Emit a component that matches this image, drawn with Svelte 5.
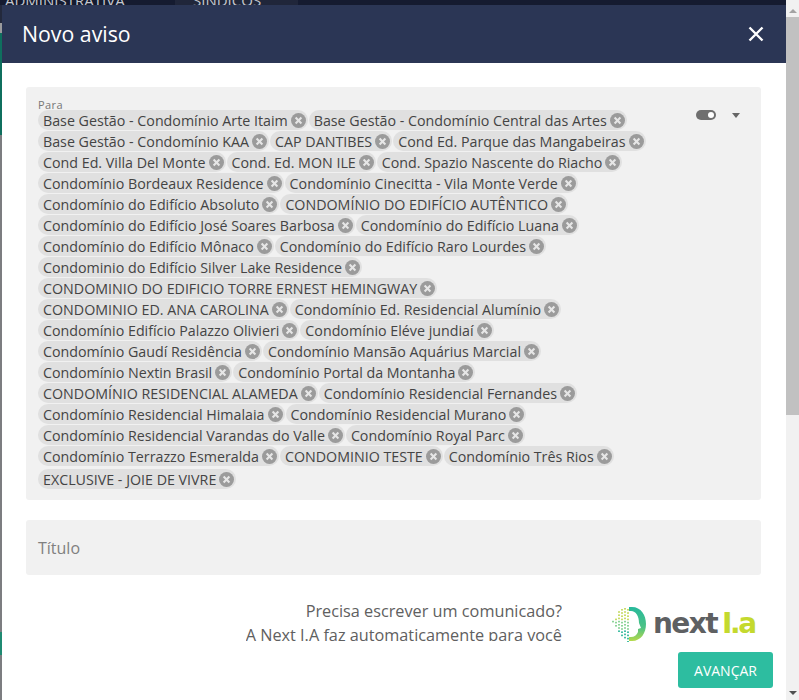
<script>
	const groups = [
		['Base Gestão - Condomínio Arte Itaim', 'Base Gestão - Condomínio Central das Artes'],
		['Base Gestão - Condomínio KAA', 'CAP DANTIBES', 'Cond Ed. Parque das Mangabeiras'],
		['Cond Ed. Villa Del Monte', 'Cond. Ed. MON ILE', 'Cond. Spazio Nascente do Riacho'],
		['Condomínio Bordeaux Residence', 'Condomínio Cinecitta - Vila Monte Verde'],
		['Condomínio do Edifício Absoluto', 'CONDOMÍNIO DO EDIFÍCIO AUTÊNTICO'],
		['Condomínio do Edifício José Soares Barbosa', 'Condomínio do Edifício Luana'],
		['Condomínio do Edifício Mônaco', 'Condomínio do Edifício Raro Lourdes'],
		['Condominio do Edifício Silver Lake Residence'],
		['CONDOMINIO DO EDIFICIO TORRE ERNEST HEMINGWAY'],
		['CONDOMINIO ED. ANA CAROLINA', 'Condomínio Ed. Residencial Alumínio'],
		['Condomínio Edifício Palazzo Olivieri', 'Condomínio Eléve jundiaí'],
		['Condomínio Gaudí Residência', 'Condomínio Mansão Aquárius Marcial'],
		['Condomínio Nextin Brasil', 'Condomínio Portal da Montanha'],
		['CONDOMÍNIO RESIDENCIAL ALAMEDA', 'Condomínio Residencial Fernandes'],
		['Condomínio Residencial Himalaia', 'Condomínio Residencial Murano'],
		['Condomínio Residencial Varandas do Valle', 'Condomínio Royal Parc'],
		['Condomínio Terrazzo Esmeralda', 'CONDOMINIO TESTE', 'Condomínio Três Rios'],
		['EXCLUSIVE - JOIE DE VIVRE']
	];
	// pixel cloud of the logo mark: narrow at top and bottom, wide in the middle
	const dots = [];
	for (let y = 2; y < 35; y += 3.2) {
		const spread = 16 - Math.abs(y - 15) * 0.7;
		for (let x = 15; x > 15 - spread; x -= 3) {
			dots.push({ x, y: y + (x % 2), color: y < 13 ? '#c9dd6a' : y < 22 ? '#8ed49a' : '#45c0a6' });
		}
	}
</script>

<div class="page">
	<div class="backdrop">
		<div class="behind"><span class="crumb">ADMINISTRATIVA</span><span class="tab">SÍNDICOS</span></div>
		<div class="modal">
			<header>
				<h2>Novo aviso</h2>
				<button class="close" aria-label="Fechar">
					<svg width="16" height="16" viewBox="0 0 16 16"><path d="M1.5 1.5 14.5 14.5M14.5 1.5 1.5 14.5" stroke="#fff" stroke-width="2.4" /></svg>
				</button>
			</header>
			<div class="content">
				<div class="field select">
					<div class="values">
						<div class="label">Para</div>
						{#each groups as group}
							<div class="row">
								{#each group as name}
									<span class="chip">
										{name}
										<svg class="remove" width="15" height="15" viewBox="0 0 15 15">
											<circle cx="7.5" cy="7.5" r="7.5" fill="#9b9b9b" />
											<path d="M4.6 4.6 10.4 10.4M10.4 4.6 4.6 10.4" stroke="#e6e6e6" stroke-width="2.1" />
										</svg>
									</span>
								{/each}
							</div>
						{/each}
					</div>
					<div class="controls">
						<span class="toggle"><i></i></span>
						<span class="caret"></span>
					</div>
				</div>
				<div class="field title">Título</div>
				<div class="promo">
					<div class="promo-text">
						<div>Precisa escrever um comunicado?</div>
						<div>A Next I.A faz automaticamente para você</div>
					</div>
					<div class="logo">
						<svg width="36" height="36" viewBox="0 0 36 36">
							<defs>
								<linearGradient id="arc" x1="0" y1="0" x2="0" y2="1">
									<stop offset="0" stop-color="#27b99b" />
									<stop offset="0.6" stop-color="#4cc285" />
									<stop offset="1" stop-color="#b5d94a" />
								</linearGradient>
							</defs>
							{#each dots as d}
								<rect x={d.x} y={d.y} width="2" height="1.6" fill={d.color} />
							{/each}
							<path d="M17 1h3c9 0 14 8 14 17s-5 17-14 17h-3v-4h2c3 0 6-2 7-5v-3l3-1-2-5c0-7-3-12-8-12h-2z" fill="url(#arc)" />
						</svg>
						<span class="logo-word"><span class="next">next</span><span class="ia">I.a</span></span>
					</div>
				</div>
				<div class="actions"><button class="next-btn">AVANÇAR</button></div>
			</div>
		</div>
	</div>
	<div class="scrollbar">
		<span class="arrow up"></span>
		<div class="thumb"></div>
		<div class="rest"></div>
		<span class="arrow down"></span>
	</div>
</div>

<style>
	:global(body) {
		margin: 0;
		font-family: 'Open Sans', sans-serif;
	}

	.page {
		display: flex;
		height: 700px;
		overflow: hidden;
		background: #5f6268;
	}

	.backdrop {
		flex: 1;
		min-width: 0;
		padding-left: 2px;
		overflow: hidden;
		background: linear-gradient(#23293c 0 23px, #9a9b9d 23px 33px, #0f6f5e 33px 135px, #7c7d80 135px 632px, #1f8a72 632px 655px, #7c7d80 655px);
	}

	.behind {
		display: flex;
		height: 5px;
		overflow: hidden;
		margin-left: -2px;
		background: #151b30;
		color: #c4c7cf;
		font-size: 15px;
		line-height: 0;
	}

	.crumb {
		width: 170px;
		padding-left: 5px;
	}

	.tab {
		width: 105px;
		padding-left: 18px;
		background: #20263a;
	}

	.modal {
		background: #fff;
		height: 695px;
		overflow: hidden;
	}

	header {
		display: flex;
		box-sizing: border-box;
		align-items: center;
		justify-content: space-between;
		height: 58px;
		padding: 0 22px 1px 20px;
		background: #2b3655;
	}

	h2 {
		margin: 0;
		color: #fff;
		font-size: 21.3px;
		font-weight: 400;
	}

	.close {
		display: flex;
		padding: 0;
		border: 0;
		background: none;
	}

	.content {
		padding: 24px 25px 0 24px;
	}

	.field {
		background: #f1f1f1;
		border-radius: 3px;
	}

	.select {
		display: flex;
		justify-content: space-between;
		padding: 11px 21px 11px 12px;
	}

	.label {
		height: 12px;
		color: #777;
		font-size: 11px;
		line-height: 13px;
		letter-spacing: 0.4px;
	}

	.row {
		display: flex;
		gap: 1px;
		height: 21px;
	}

	.chip {
		display: flex;
		align-items: center;
		gap: 3px;
		height: 20px;
		padding: 0 2px 0 5px;
		border-radius: 10px;
		background: #e0e0e0;
		color: #444;
		font-size: 14.25px;
		white-space: nowrap;
	}

	.row:last-child {
		height: 20px;
		margin-top: 2px;
	}

	.controls {
		display: flex;
		align-items: center;
		gap: 16px;
		height: 14px;
		margin-top: 10px;
	}

	.toggle {
		display: flex;
		align-items: center;
		justify-content: flex-end;
		box-sizing: border-box;
		width: 20px;
		height: 10px;
		padding-right: 2px;
		border-radius: 5px;
		background: #6f6f6f;
	}

	.toggle i {
		width: 6px;
		height: 6px;
		border-radius: 50%;
		background: #fff;
	}

	.caret {
		border: 4.5px solid transparent;
		border-top: 5px solid #666;
		border-bottom: 0;
	}

	.title {
		display: flex;
		align-items: center;
		height: 55px;
		margin-top: 20px;
		padding-left: 12px;
		color: #808080;
		font-size: 16px;
	}

	.promo {
		display: flex;
		justify-content: flex-end;
		gap: 50px;
		height: 66px;
		margin-top: 24px;
		margin-right: -12px;
		padding-right: 18px;
	}

	.promo-text {
		height: 42px;
		overflow: hidden;
		color: #606060;
		font-size: 16.25px;
		line-height: 24px;
		text-align: right;
	}

	.logo {
		display: flex;
		align-items: flex-start;
		gap: 5px;
		width: 143px;
		padding-top: 7px;
	}

	.logo-word {
		margin-top: 1px;
		font-family: 'DejaVu Sans', sans-serif;
		font-size: 28px;
		font-weight: 700;
		line-height: 34px;
		white-space: nowrap;
	}

	.next {
		margin-right: 5px;
		color: #5e6062;
		letter-spacing: -1.6px;
	}

	.ia {
		color: #c4d92e;
		letter-spacing: -2.4px;
	}

	.actions {
		display: flex;
		justify-content: flex-end;
		margin-top: -13px;
		margin-right: -12px;
	}

	.next-btn {
		width: 95px;
		height: 36px;
		border: 0;
		border-radius: 3px;
		background: #2dbda0;
		color: #fff;
		font-family: inherit;
		font-size: 14px;
	}

	.scrollbar {
		display: flex;
		flex-direction: column;
		align-items: center;
		width: 13px;
		background: #f1f1f1;
	}

	.arrow {
		flex: none;
		border: 4px solid transparent;
	}

	.up {
		margin: 9px 0 4px;
		border-top: 0;
		border-bottom: 4px solid #a3a3a3;
	}

	.down {
		margin: 6px 0 5px;
		border-bottom: 0;
		border-top: 4px solid #505050;
	}

	.thumb {
		flex: none;
		width: 100%;
		height: 398px;
		background: #c1c1c1;
	}

	.rest {
		flex: 1;
	}
</style>
